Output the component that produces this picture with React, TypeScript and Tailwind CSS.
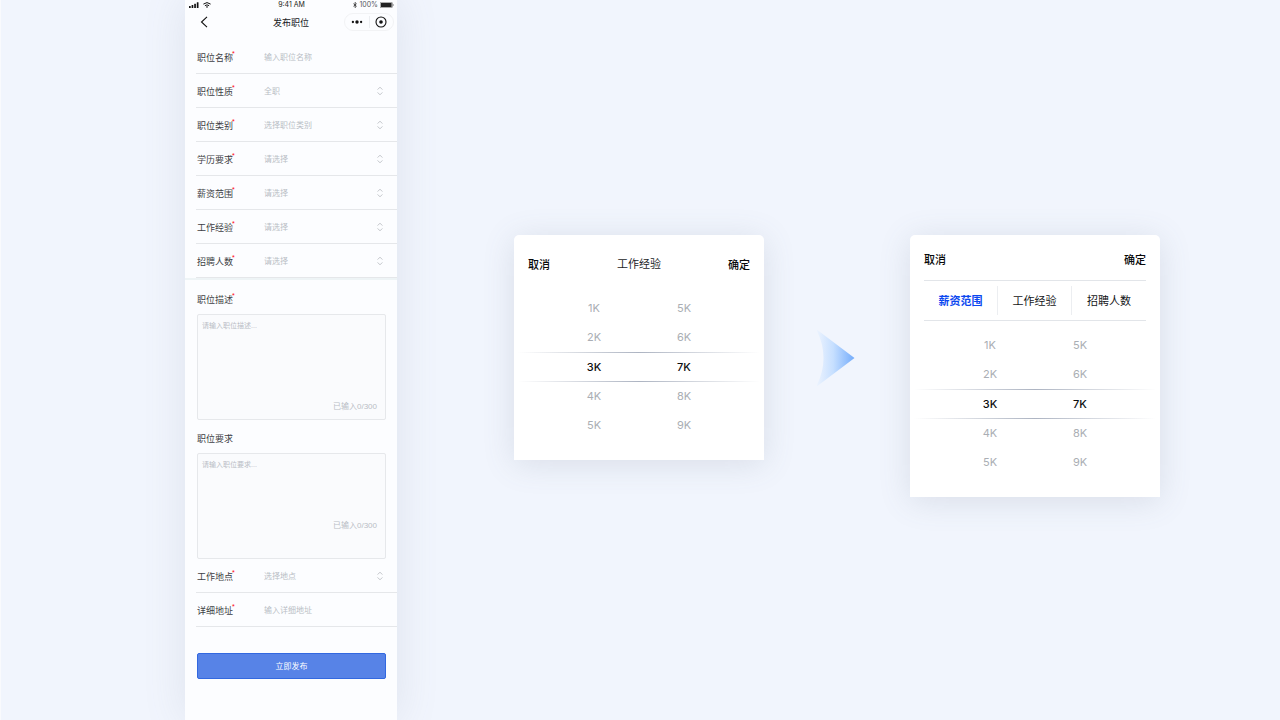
import { useState } from "react";

type Field = {
  id: string;
  label: string;
  hint: string;
  kind: "input" | "select";
};

const mainFields: Field[] = [
  { id: "name", label: "职位名称", hint: "输入职位名称", kind: "input" },
  { id: "nature", label: "职位性质", hint: "全职", kind: "select" },
  { id: "category", label: "职位类别", hint: "选择职位类别", kind: "select" },
  { id: "education", label: "学历要求", hint: "请选择", kind: "select" },
  { id: "salary", label: "薪资范围", hint: "请选择", kind: "select" },
  { id: "experience", label: "工作经验", hint: "请选择", kind: "select" },
  { id: "headcount", label: "招聘人数", hint: "请选择", kind: "select" },
];

const placeFields: Field[] = [
  { id: "place", label: "工作地点", hint: "选择地点", kind: "select" },
  { id: "address", label: "详细地址", hint: "输入详细地址", kind: "input" },
];

function Required() {
  return (
    <span aria-hidden="true" className="absolute left-full top-0 -ml-px text-[7px] leading-[6px] text-[#ff0010]">
      *
    </span>
  );
}

function FieldRow({ field }: { field: Field }) {
  return (
    <div className="ml-[11px] flex h-[34px] items-center border-b border-[#e5e7ea]">
      <div className="flex w-[68px] shrink-0 pl-px pt-[2px]">
        <label htmlFor={field.id} className="relative text-[9px] leading-[14px] text-[#3c3f44]">
          {field.label}
          <Required />
        </label>
      </div>
      {field.kind === "input" ? (
        <input
          id={field.id}
          placeholder={field.hint}
          className="h-5 min-w-0 flex-1 bg-transparent pt-px text-[8px] text-[#3c3f44] outline-none placeholder:text-[#b9bdc5]"
        />
      ) : (
        <div className="relative flex min-w-0 flex-1 items-center">
          <select id={field.id} className="h-5 w-full appearance-none bg-transparent pt-[2px] text-[8px] text-[#b9bdc5] outline-none">
            <option>{field.hint}</option>
          </select>
          <svg
            className="pointer-events-none absolute right-[14px] h-[10px] w-[6px]"
            viewBox="0 0 6 10"
            fill="none"
            stroke="#b4b7bd"
            strokeWidth="0.8"
          >
            <path d="M.6 3.600 3 1.200l2.400 2.400M.6 6.400 3 8.800l2.400-2.400" />
          </svg>
        </div>
      )}
    </div>
  );
}

function TextBlock({
  id,
  label,
  hint,
  required,
  counterClass,
}: {
  id: string;
  label: string;
  hint: string;
  required?: boolean;
  counterClass: string;
}) {
  return (
    <div className="px-3">
      <div className="flex h-[33px] items-center pt-1">
        <label htmlFor={id} className="relative text-[9px] leading-[14px] text-[#3c3f44]">
          {label}
          {required && <Required />}
        </label>
      </div>
      <div className="relative -mr-px">
        <textarea
          id={id}
          placeholder={hint}
          className="block h-[106px] w-full resize-none rounded-[2px] border border-[#e6e8eb] bg-[#fafbfd] px-1 py-[5px] text-[7px] leading-[12px] outline-none placeholder:text-[#b9bdc5]"
        />
        <span className={`absolute right-[9px] text-[8px] leading-[10px] text-[#b9bdc5] ${counterClass}`}>
          已输入0/300
        </span>
      </div>
    </div>
  );
}

function StatusBar() {
  return (
    <div className="flex h-[10px] items-center justify-between pl-1 pr-[3px] font-['Inter','Noto_Sans_CJK_SC',sans-serif] text-[7px] leading-[10px] text-[#1b1d20]">
      <div className="flex w-10 items-center gap-1">
        <svg className="h-[6px] w-[10px]" viewBox="0 0 10 6" fill="#111">
          <rect x="0" y="4" width="1.700" height="2" rx=".3" />
          <rect x="2.600" y="3" width="1.700" height="3" rx=".3" />
          <rect x="5.200" y="1.700" width="1.700" height="4.300" rx=".3" />
          <rect x="7.800" y="0.200" width="1.700" height="5.800" rx=".3" />
        </svg>
        <svg className="h-[6px] w-2" viewBox="0 0 8 6" fill="none" stroke="#111" strokeWidth="1">
          <path d="M.4 2.100Q4-.9 7.600 2.100M1.900 3.700Q4 2 6.100 3.700" />
          <path d="M4 5.900 2.900 4.800Q4 3.900 5.100 4.800Z" fill="#111" stroke="none" />
        </svg>
      </div>
      <span>9:41 AM</span>
      <div className="flex w-10 items-center justify-end gap-[2px]">
        <svg className="h-[6px] w-1 shrink-0" viewBox="0 0 4 6" fill="none" stroke="#222" strokeWidth=".7">
          <path d="M.4 1.600 3.400 4.300 2 5.600V.4L3.400 1.700.4 4.400" />
        </svg>
        <span className="text-[#55585d]">100%</span>
        <svg className="h-[6px] w-[14px] shrink-0" viewBox="0 0 14 6">
          <rect x=".3" y=".3" width="12" height="5.400" rx=".8" fill="#fff" stroke="#333" strokeWidth=".5" />
          <rect x="1" y="1" width="10.600" height="4" fill="#222" />
          <path d="M12.900 2v2q.8-.3.8-1t-.8-1Z" fill="#555" />
        </svg>
      </div>
    </div>
  );
}

function PhoneForm() {
  return (
    <main className="min-h-screen w-[212px] shrink-0 bg-[#fcfdff] shadow-[0_0_40px_rgba(110,120,140,0.14)]">
      <StatusBar />
      <header className="mb-[6px] grid h-6 grid-cols-[53px_1fr_53px] items-center">
        <button type="button" aria-label="返回" className="pl-[15px]">
          <svg className="h-3 w-2" viewBox="0 0 8 12" fill="none" stroke="#111" strokeWidth="1.100">
            <path d="M7 .8 1.500 6 7 11.200" />
          </svg>
        </button>
        <h1 className="pt-px text-center text-[9px] leading-[14px] text-[#17191c]">发布职位</h1>
        <div className="flex h-[18px] w-[50px] items-center rounded-full border border-[#f2f3f5]">
          <button type="button" aria-label="更多" className="flex flex-1 justify-center">
            <svg className="h-1 w-3" viewBox="0 0 12 4" fill="#111">
              <circle cx="1.900" cy="2" r="1.150" />
              <circle cx="6" cy="2" r="1.700" />
              <circle cx="10.100" cy="2" r="1.150" />
            </svg>
          </button>
          <span className="h-3 w-px bg-[#eceef1]" />
          <button type="button" aria-label="关闭" className="flex flex-1 justify-center">
            <svg className="h-3 w-3" viewBox="0 0 12 12">
              <circle cx="6" cy="6" r="5" fill="none" stroke="#111" strokeWidth="1.100" />
              <circle cx="6" cy="6" r="1.800" fill="#111" />
            </svg>
          </button>
        </div>
      </header>
      <form onSubmit={(e) => e.preventDefault()}>
        {mainFields.map((f) => (
          <FieldRow key={f.id} field={f} />
        ))}
        <div className="h-[3px] border-b border-[#fcfdff] bg-[#eef4f6]" />
        <TextBlock id="description" label="职位描述" hint="请输入职位描述..." required counterClass="bottom-2" />
        <TextBlock id="requirement" label="职位要求" hint="请输入职位要求..." counterClass="bottom-7" />
        {placeFields.map((f) => (
          <FieldRow key={f.id} field={f} />
        ))}
        <div className="flex pl-3 pr-[11px] pt-[26px]">
          <button
            type="submit"
            className="h-[26px] flex-1 rounded-[2px] border border-[#3268e0] bg-[#5783e7] pt-px text-[8px] leading-[14px] text-white"
          >
            立即发布
          </button>
        </div>
      </form>
    </main>
  );
}

function Column({ values, label }: { values: string[]; label: string }) {
  const [picked, setPicked] = useState(2);
  return (
    <div role="listbox" aria-label={label} className="flex w-[90px] flex-col">
      {values.map((v, i) => (
        <button
          key={v}
          type="button"
          role="option"
          aria-selected={i === picked}
          onClick={() => setPicked(i)}
          className={`pb-px font-['Inter',sans-serif] text-[11px] leading-4 ${i === 2 ? "h-[30px]" : "h-[29px]"} ${
            i === picked ? "font-medium text-[#0c0d0f]" : "text-[#aaaeb4]"
          }`}
        >
          {v}
        </button>
      ))}
    </div>
  );
}

function Wheel() {
  return (
    <div className="relative flex justify-center">
      <Column label="最低" values={["1K", "2K", "3K", "4K", "5K"]} />
      <Column label="最高" values={["5K", "6K", "7K", "8K", "9K"]} />
      <div className="pointer-events-none absolute inset-x-1 top-[58px] flex h-[30px] flex-col justify-between">
        <span className="h-px bg-linear-to-r from-transparent via-[#adb4c2] to-transparent" />
        <span className="h-px bg-linear-to-r from-transparent via-[#adb4c2] to-transparent" />
      </div>
    </div>
  );
}

const cardClass =
  "w-[250px] shrink-0 rounded-t-[5px] bg-white shadow-[0_4px_32px_rgba(95,105,125,0.16)]";

function SinglePicker() {
  return (
    <section className={`${cardClass} pb-5`}>
      <header className="flex h-[59px] items-center justify-between px-[14px] text-[11px] leading-4 text-[#08090a]">
        <button type="button" className="font-medium">取消</button>
        <h2 className="pb-[2px] text-[#222427]">工作经验</h2>
        <button type="button" className="font-medium">确定</button>
      </header>
      <Wheel />
    </section>
  );
}

function TabbedPicker() {
  const tabs = ["薪资范围", "工作经验", "招聘人数"];
  const [active, setActive] = useState(0);
  return (
    <section className={`${cardClass} pb-5`}>
      <div className="px-[14px]">
        <header className="flex h-[45px] items-center justify-between pt-1 text-[11px] font-medium leading-4 text-[#08090a]">
          <button type="button">取消</button>
          <button type="button">确定</button>
        </header>
        <div role="tablist" className="mb-[10px] grid h-[41px] grid-cols-3 items-center border-y border-[#e2e5e9]">
          {tabs.map((t, i) => (
            <button
              key={t}
              type="button"
              role="tab"
              aria-selected={i === active}
              onClick={() => setActive(i)}
              className={`h-[29px] border-r border-[#eceef1] text-[11px] leading-4 last:border-r-0 ${
                i === active ? "font-bold text-[#0a47f0]" : "text-[#141517]"
              }`}
            >
              {t}
            </button>
          ))}
        </div>
      </div>
      <Wheel />
    </section>
  );
}

export default function App() {
  return (
    <div
      lang="zh-CN"
      className="flex min-h-screen items-stretch border-l border-[#f9fafd] bg-[#f1f5fd] pl-[184px] font-['Liberation_Sans','Noto_Sans_CJK_SC',sans-serif]"
    >
      <PhoneForm />
      <div className="flex flex-1 items-start pb-10 pl-[117px] pt-[235px]">
        <SinglePicker />
        <svg className="mx-[53px] mt-[94px] h-[58px] w-10 shrink-0" viewBox="0 0 40 58">
          <defs>
            <linearGradient id="fade" x1="0" x2="1" y1="0" y2="0">
              <stop offset="0" stopColor="#eef4fe" />
              <stop offset=".45" stopColor="#c6dfff" />
              <stop offset="1" stopColor="#74acfb" />
            </linearGradient>
          </defs>
          <path d="M-1 0 37.500 29 -1 58Q14 29 -1 0Z" fill="url(#fade)" />
        </svg>
        <TabbedPicker />
      </div>
    </div>
  );
}
